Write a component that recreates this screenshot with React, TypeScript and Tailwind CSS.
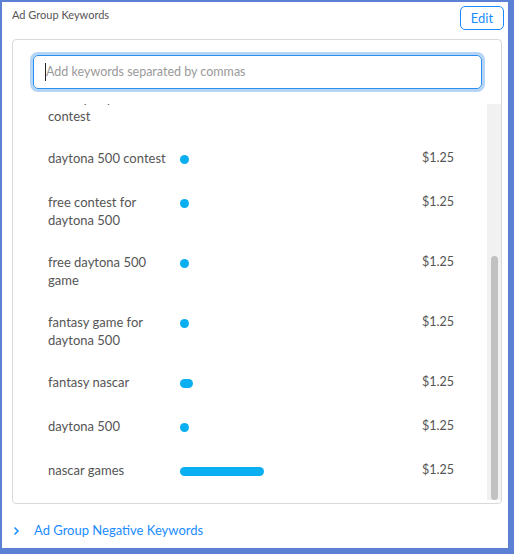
type Keyword = {
  text: string;
  bar: number;
  bid: string;
};

// rows above "daytona 500 contest" sit under the fold, the list is scrolled to the end
const keywords: Keyword[] = [
  { text: 'daytona 500 race', bar: 9, bid: '$1.25' },
  { text: 'nascar contest', bar: 9, bid: '$1.25' },
  { text: 'fantasy daytona 500 contest', bar: 9, bid: '$1.25' },
  { text: 'daytona 500 contest', bar: 9, bid: '$1.25' },
  { text: 'free contest for daytona 500', bar: 9, bid: '$1.25' },
  { text: 'free daytona 500 game', bar: 9, bid: '$1.25' },
  { text: 'fantasy game for daytona 500', bar: 9, bid: '$1.25' },
  { text: 'fantasy nascar', bar: 13, bid: '$1.25' },
  { text: 'daytona 500', bar: 9, bid: '$1.25' },
  { text: 'nascar games', bar: 84, bid: '$1.25' },
];

function KeywordRow({ keyword }: { keyword: Keyword }) {
  return (
    <div className="flex min-h-[44px] shrink-0 items-start py-[12px] pl-[35px] text-[13px] leading-[18px] text-[#555]">
      <div className="w-[132px] shrink-0 pr-[10px]">{keyword.text}</div>
      <div className="flex flex-1 pt-[6px]">
        <div
          className="h-[9px] rounded-full bg-[#0aaff2]"
          style={{ width: keyword.bar }}
        />
      </div>
      <div className="w-[65px] shrink-0 text-[12.5px]">{keyword.bid}</div>
    </div>
  );
}

export default function App() {
  return (
    <div
      className="flex h-[554px] w-[514px] flex-col border-t-2 border-r-[6px] border-b-[6px] border-l-2 border-[#5b80d4] bg-white"
      style={{ fontFamily: 'Lato, "Open Sans", sans-serif' }}
    >
      <div className="flex h-[37px] shrink-0 items-start justify-between pr-[4px] pl-[10px]">
        <span className="pt-[5px] text-[11px] leading-[16px] text-[#555]">Ad Group Keywords</span>
        <button className="mt-[4px] h-[24px] w-[44px] rounded-[5px] border border-[#1a8cff] text-[13px] leading-[20px] text-[#1a8cff]">
          Edit
        </button>
      </div>

      <div className="mr-[6px] ml-[10px] flex h-[465px] shrink-0 flex-col rounded-[4px] border border-[#d9d9d9]">
        <div className="shrink-0 pt-[15px] pr-[19px] pl-[20px]">
          <div className="flex h-[34px] items-center rounded-[5px] border border-[#2b8ff0] pl-[11px] shadow-[0_0_0_3px_#b5d5f7]">
            <span className="h-[18px] w-px bg-[#222]" />
            <span className="text-[12.5px] text-[#9a9a9a]">Add keywords separated by commas</span>
          </div>
        </div>

        <div className="mt-[15px] flex min-h-0 flex-1">
          <div className="flex min-w-0 flex-1 flex-col justify-end overflow-hidden pb-[10px]">
            {keywords.map((k) => (
              <KeywordRow key={k.text} keyword={k} />
            ))}
          </div>
          <div className="mb-[3px] flex w-[14px] shrink-0 flex-col bg-[#f1f1f1] pr-[3px] pl-[4px]">
            <div className="mt-[152px] flex-1 rounded-full bg-[#c1c1c1]" />
          </div>
        </div>
      </div>

      <div className="flex items-center gap-[14px] pt-[17px] pl-[11px] text-[13px] text-[#1a8cff]">
        <svg width="7" height="10" viewBox="0 0 7 10" fill="none" stroke="#1a8cff" strokeWidth="1.5">
          <path d="M1.5 1.5 L5 5 L1.5 8.5" />
        </svg>
        <span>Ad Group Negative Keywords</span>
      </div>
    </div>
  );
}
